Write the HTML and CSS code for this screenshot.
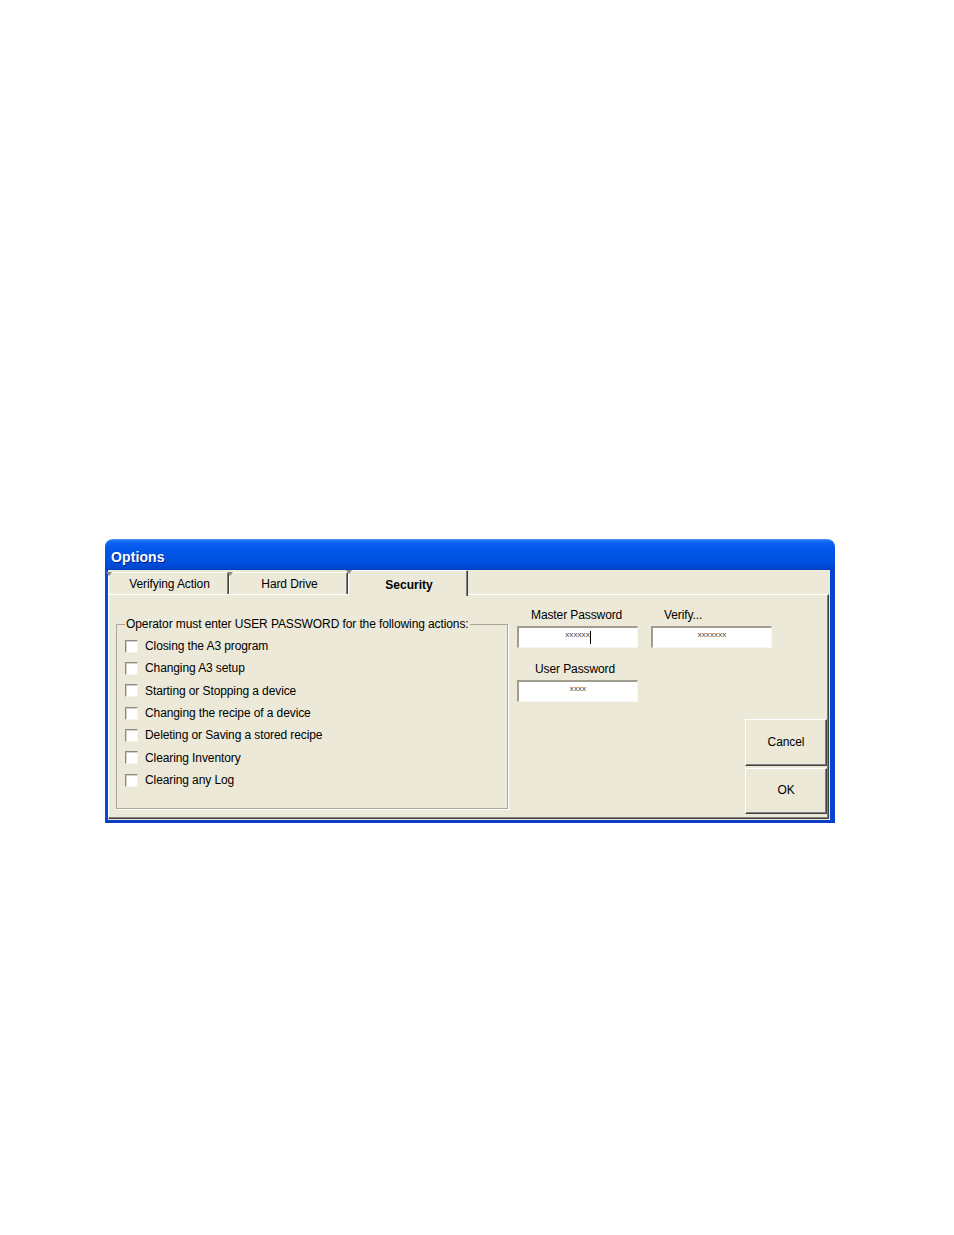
FILE: index.html
```html
<!DOCTYPE html>
<html>
<head>
<meta charset="utf-8">
<link rel="stylesheet" href="styles.css">
</head>
<body>
<div class="screen">
  <div class="window">
    <div class="titlebar"><span class="title">Options</span></div>
    <div class="frame">
      <div class="tabs">
        <div class="tab"><span>Verifying Action</span></div>
        <div class="tab"><span>Hard Drive</span></div>
        <div class="tab selected"><span>Security</span></div>
      </div>
      <div class="panel">
        <fieldset class="group">
          <legend>Operator must enter USER PASSWORD for the following actions:</legend>
          <div class="row"><span class="box"></span><span>Closing the A3 program</span></div>
          <div class="row"><span class="box"></span><span>Changing A3 setup</span></div>
          <div class="row"><span class="box"></span><span>Starting or Stopping a device</span></div>
          <div class="row"><span class="box"></span><span>Changing the recipe of a device</span></div>
          <div class="row"><span class="box"></span><span>Deleting or Saving a stored recipe</span></div>
          <div class="row"><span class="box"></span><span>Clearing Inventory</span></div>
          <div class="row"><span class="box"></span><span>Clearing any Log</span></div>
        </fieldset>
        <div class="side">
          <div class="fields">
            <div class="field">
              <div class="label label-master">Master Password</div>
              <div class="input"><span class="val">xxxxxx</span><span class="caret"></span></div>
            </div>
            <div class="field field-verify">
              <div class="label label-verify">Verify...</div>
              <div class="input"><span class="val">xxxxxxx</span></div>
            </div>
          </div>
          <div class="field field-user">
            <div class="label label-user">User Password</div>
            <div class="input"><span class="val">xxxx</span></div>
          </div>
          <div class="buttons">
            <div class="btn">Cancel</div>
            <div class="btn">OK</div>
          </div>
        </div>
      </div>
    </div>
  </div>
</div>
</body>
</html>
```

FILE: styles.css
```css
html, body {
  margin: 0;
  padding: 0;
  background: #ffffff;
}

.screen {
  box-sizing: border-box;
  height: 1235px;
  padding: 539px 0 0 105px;
  font-family: "Liberation Sans", Arial, sans-serif;
  font-size: 12px;
  letter-spacing: -0.1px;
  color: #000;
}

.window {
  width: 730px;
}

.titlebar {
  height: 31px;
  border-radius: 8px 8px 0 0;
  background: linear-gradient(to bottom, #4a94ff 0px, #1a6cf6 2px, #0a5ef0 5px, #0056e8 12px, #0052e2 20px, #004bd8 26px, #0043c8 30px, #003cbc 31px);
  display: flex;
  align-items: center;
  padding-left: 6px;
  box-sizing: border-box;
}

.title {
  color: #fff;
  font-weight: bold;
  font-size: 14px;
  letter-spacing: 0.1px;
  text-shadow: 1px 1px 0 #0a1e8c;
  padding-top: 5px;
}

.frame {
  background: #ece9d8;
  border-left: 3px solid #0848d8;
  border-right: 5px solid #0743d2;
  border-bottom: 3px solid #0a3cc4;
  height: 250px;
  display: flex;
  flex-direction: column;
}

.tabs {
  display: flex;
  align-items: flex-end;
  height: 24px;
  position: relative;
  z-index: 1;
}

.tab {
  position: relative;
  box-sizing: border-box;
  height: 22px;
  width: 121px;
  border-top: 1px solid #fff;
  border-left: 1px solid #fff;
  border-right: 1px solid #404040;
  box-shadow: inset -1px 0 0 #808080;
  display: flex;
  align-items: center;
  justify-content: center;
  background: #ece9d8;
  padding-left: 2px;
}

.tab::before {
  content: "";
  position: absolute;
  left: -3px;
  top: -1px;
  border-left: 3px solid transparent;
  border-right: 3px solid transparent;
  border-top: 4px solid #8a8a86;
}

.tab:nth-child(2) {
  width: 119px;
}

.tab.selected {
  width: 120px;
  height: 26px;
  margin-bottom: -2px;
  font-weight: bold;
  letter-spacing: 0;
  padding-top: 2px;
}

.panel {
  flex: 1;
  margin: 0 1px 1px 0;
  border-top: 1px solid #fff;
  border-left: 1px solid #fff;
  border-right: 1px solid #404040;
  border-bottom: 1px solid #404040;
  box-shadow: inset -1px -1px 0 #808080;
  display: grid;
  grid-template-columns: 392px 1fr;
  column-gap: 9px;
  padding-left: 7px;
}

.group {
  margin: 22px 0 9px 0;
  padding: 4px 0 0 8px;
  border: 1px solid #aca899;
  box-shadow: 1px 1px 0 #fff;
  min-width: 0;
}

.group legend {
  padding: 0 1px;
  line-height: 14px;
}

.row {
  height: 22.33px;
  display: flex;
  align-items: center;
}

.box {
  box-sizing: border-box;
  width: 13px;
  height: 13px;
  background: #fff;
  border-top: 1px solid #8c8a80;
  border-left: 1px solid #8c8a80;
  border-right: 1px solid #f4f3ee;
  border-bottom: 1px solid #f4f3ee;
  box-shadow: inset 1px 1px 0 #d4d0c8;
  margin-right: 7px;
}

.side {
  display: flex;
  flex-direction: column;
  padding-top: 13px;
  padding-right: 1px;
}

.fields {
  display: flex;
  column-gap: 13px;
}

.label {
  line-height: 14px;
  margin-bottom: 4px;
}

.label-master {
  padding-left: 14px;
}

.label-verify {
  padding-left: 13px;
}

.label-user {
  padding-left: 18px;
}

.field-user {
  margin-top: 14px;
}

.input {
  box-sizing: border-box;
  width: 121px;
  height: 22px;
  background: #fff;
  border-top: 2px solid #a19e91;
  border-left: 2px solid #a19e91;
  border-right: 1px solid #f7f6f1;
  border-bottom: 1px solid #f7f6f1;
  display: flex;
  justify-content: center;
  align-items: flex-start;
  padding-top: 2px;
}

.val {
  font-size: 8px;
  letter-spacing: 0.1px;
  line-height: 9px;
  color: #444;
}

.caret {
  display: inline-block;
  width: 1px;
  height: 13px;
  background: #000;
  margin-top: 1px;
}

.buttons {
  margin-top: auto;
  margin-bottom: 4px;
  align-self: flex-end;
  display: flex;
  flex-direction: column;
  row-gap: 2px;
}

.btn {
  box-sizing: border-box;
  width: 82px;
  height: 47px;
  background: #ece9d8;
  border-top: 1px solid #fff;
  border-left: 1px solid #fff;
  border-right: 1px solid #404040;
  border-bottom: 1px solid #404040;
  box-shadow: inset -1px -1px 0 #808080;
  display: flex;
  align-items: center;
  justify-content: center;
  padding-bottom: 2px;
}

.btn + .btn {
  height: 46px;
}
```
